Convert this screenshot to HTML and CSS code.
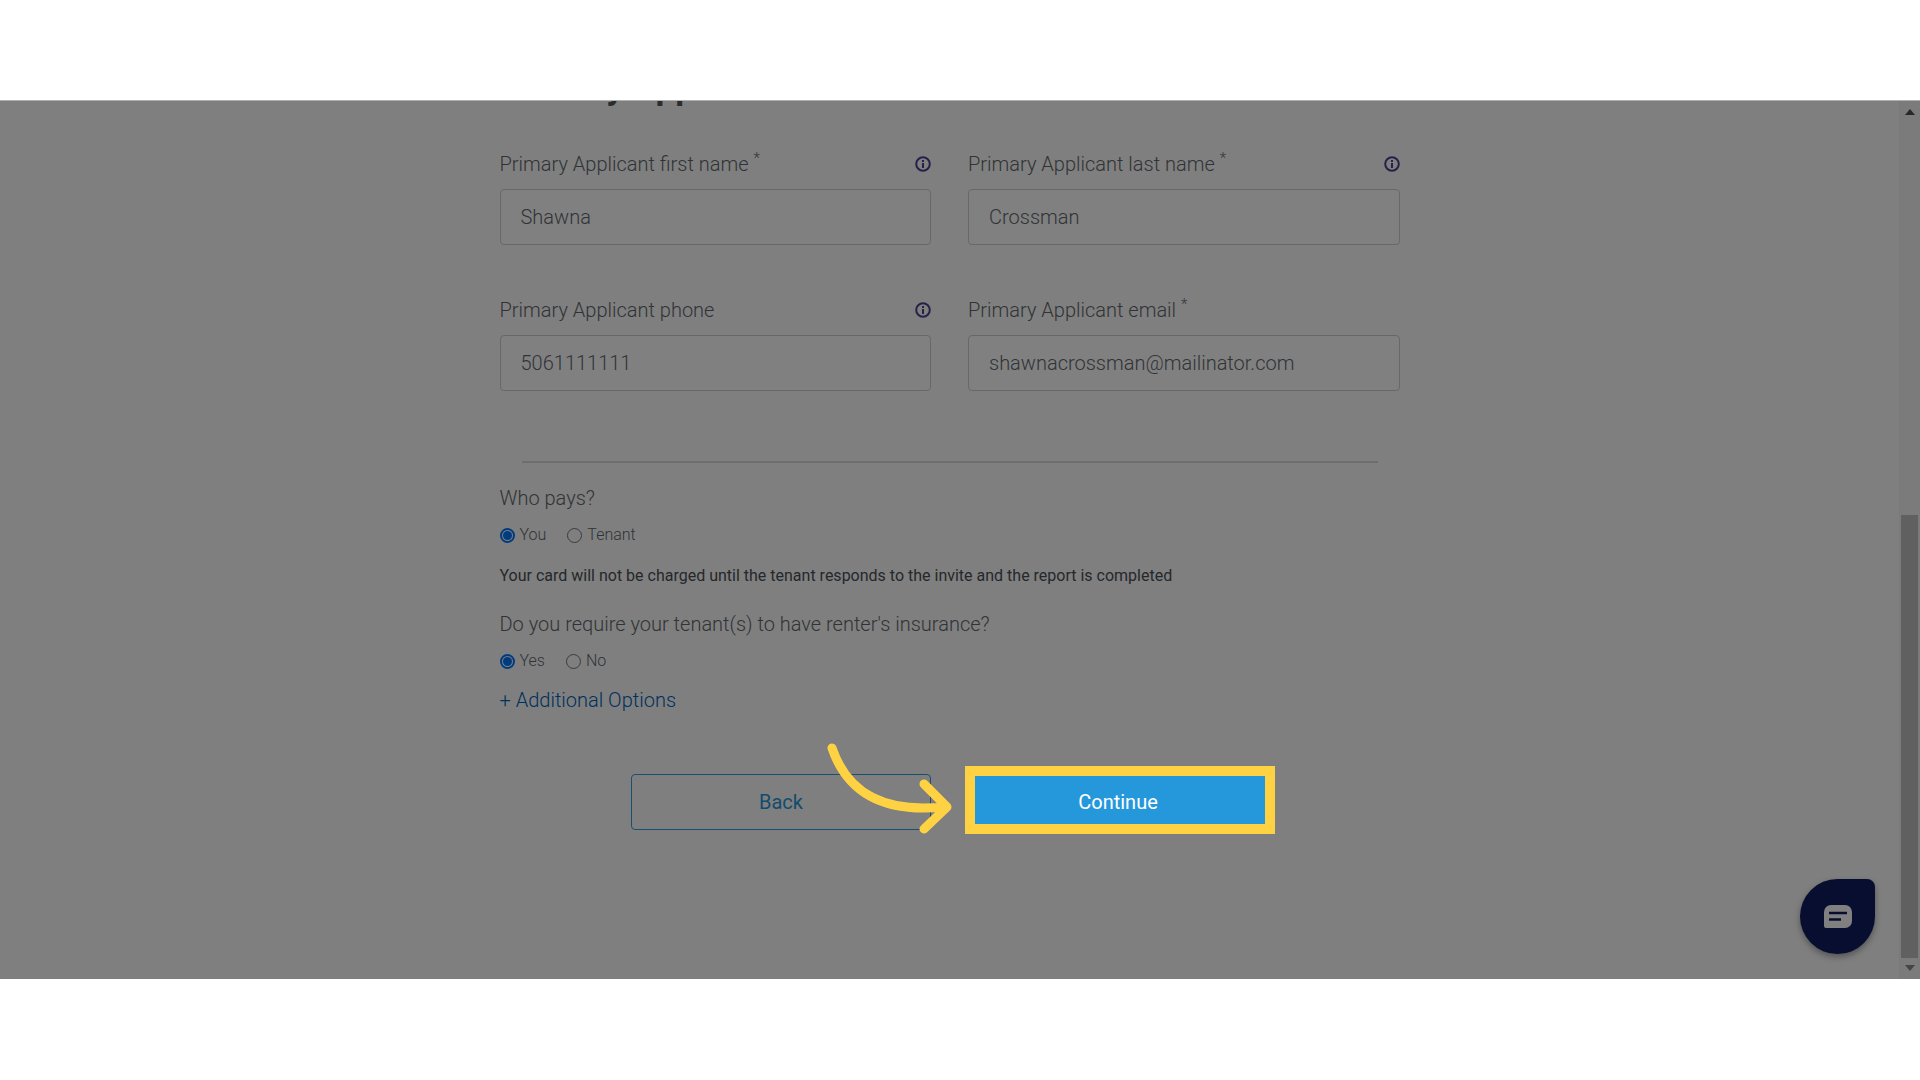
FILE: index.html
```html
<!DOCTYPE html>
<html lang="en">
<head>
    <meta charset="UTF-8">
    <meta name="viewport" content="width=device-width, initial-scale=1.0">
    <title>Primary Applicant</title>
    <link rel="stylesheet" href="styles.css">
</head>
<body>
    <div class="screen">
        <main class="content">
            <form class="form">
                <h1>Primary Applicant</h1>
                <div class="fields">
                    <div class="field">
                        <div class="field-head">
                            <label for="firstName">Primary Applicant first name <sup>*</sup></label>
                            <svg class="info" viewBox="0 0 16 16"><circle cx="8" cy="8" r="6.8"/><path d="M8 7v5M8 4v2"/></svg>
                        </div>
                        <input type="text" id="firstName" value="Shawna">
                    </div>
                    <div class="field">
                        <div class="field-head">
                            <label for="lastName">Primary Applicant last name <sup>*</sup></label>
                            <svg class="info" viewBox="0 0 16 16"><circle cx="8" cy="8" r="6.8"/><path d="M8 7v5M8 4v2"/></svg>
                        </div>
                        <input type="text" id="lastName" value="Crossman">
                    </div>
                    <div class="field">
                        <div class="field-head">
                            <label for="phone">Primary Applicant phone</label>
                            <svg class="info" viewBox="0 0 16 16"><circle cx="8" cy="8" r="6.8"/><path d="M8 7v5M8 4v2"/></svg>
                        </div>
                        <input type="tel" id="phone" value="5061111111">
                    </div>
                    <div class="field">
                        <div class="field-head">
                            <label for="email">Primary Applicant email <sup>*</sup></label>
                        </div>
                        <input type="email" id="email" value="shawnacrossman@mailinator.com">
                    </div>
                </div>
                <hr>
                <fieldset>
                    <legend>Who pays?</legend>
                    <div class="radios">
                        <label><input type="radio" name="payer" checked>You</label>
                        <label><input type="radio" name="payer">Tenant</label>
                    </div>
                </fieldset>
                <p class="note">Your card will not be charged until the tenant responds to the invite and the report is completed</p>
                <fieldset>
                    <legend>Do you require your tenant(s) to have renter's insurance?</legend>
                    <div class="radios">
                        <label><input type="radio" name="insurance" checked>Yes</label>
                        <label><input type="radio" name="insurance">No</label>
                    </div>
                </fieldset>
                <a class="more" href="#">+ Additional Options</a>
                <div class="buttons">
                    <button type="button" class="btn btn-back">Back</button>
                    <div class="target">
                        <button type="button" class="btn btn-continue">Continue</button>
                        <div class="highlight"></div>
                        <svg class="arrow" viewBox="0 0 130 100"><path d="M10 10C26 57 64 75 122 69M102 46l23 23-23 22"/></svg>
                    </div>
                </div>
            </form>
        </main>
        <div class="scrollbar">
            <svg class="scroll-arrow" viewBox="0 0 10 6"><path d="M5 0l5 6H0z"/></svg>
            <div class="track"><div class="thumb"></div></div>
            <svg class="scroll-arrow down" viewBox="0 0 10 6"><path d="M0 0h10L5 6z"/></svg>
        </div>
        <button type="button" class="chat" aria-label="Chat">
            <svg viewBox="0 0 28 23"><path class="bubble" d="M7 0h14a7 7 0 0 1 7 7v9a7 7 0 0 1-7 7H2a2 2 0 0 1-2-2V7a7 7 0 0 1 7-7z"/><path class="lines" d="M5 8h18M5 14.500h12"/></svg>
        </button>
    </div>
</body>
</html>
```
FILE: styles.css
```css
* {
    box-sizing: border-box;
}
body {
    font-family: Roboto, sans-serif;
    font-weight: 300;
    font-size: 20px;
    line-height: 24px;
    color: #303336;
    background-color: #fff;
    margin: 0;
    padding: 100px 0 101px;
    min-height: 100vh;
    display: flex;
}
.screen {
    position: relative;
    flex: 1;
    display: flex;
    overflow: hidden;
    background-color: #7f7f7f;
    border-top: 1px solid #adb0ad;
}
.content {
    flex: 1;
    padding: 0 20px;
}
.form {
    max-width: 900px;
    margin: 0 auto;
}
h1 {
    font-size: 35px;
    font-weight: 700;
    line-height: 40px;
    margin: -33px 0 42px;
    color: #2a2d30;
}
.fields {
    display: grid;
    grid-template-columns: 1fr 1fr;
    gap: 51px 37px;
}
.field-head {
    display: flex;
    justify-content: space-between;
    align-items: center;
    height: 28px;
    margin-bottom: 11px;
}
sup {
    font-size: 15px;
    line-height: 0;
}
.info {
    width: 16px;
    height: 16px;
    fill: none;
    stroke: #29204a;
    stroke-width: 2;
}
.field input {
    width: 100%;
    height: 56px;
    padding: 0 20px;
    border: 1px solid #686868;
    border-radius: 4px;
    background-color: #808080;
    font: inherit;
    color: inherit;
    display: block;
}
hr {
    height: 2px;
    margin: 70px 22px 23px;
    border: none;
    background-color: #6e6e6e;
}
fieldset {
    border: none;
    margin: 0;
    padding: 0;
}
legend {
    padding: 0;
    margin-bottom: 13px;
}
.radios {
    display: flex;
    gap: 21px;
    font-size: 16px;
}
.radios label {
    display: flex;
    align-items: center;
    gap: 5px;
}
.radios input {
    appearance: none;
    width: 15px;
    height: 15px;
    margin: 0;
    border: 1px solid #3b3b3b;
    border-radius: 50%;
}
.radios input:checked {
    border: 2px solid #003b7f;
    background: #003b7f content-box;
    padding: 1px;
}
.note {
    font-size: 16px;
    font-weight: 400;
    margin: 17px 0 24px;
    color: #24282b;
}
.more {
    display: inline-block;
    margin-top: 15px;
    color: #00305c;
    text-decoration: none;
}
.buttons {
    display: flex;
    justify-content: center;
    gap: 37px;
    margin-top: 62px;
}
.btn {
    width: 300px;
    height: 56px;
    border: 1px solid #175170;
    border-radius: 4px;
    background: none;
    font: inherit;
    font-weight: 400;
    color: #124c6c;
}
.target {
    position: relative;
}
.btn-continue {
    border: none;
    background-color: #2598db;
    color: #fff;
}
.highlight {
    position: absolute;
    top: -8px;
    left: -3px;
    width: 310px;
    height: 68px;
    border: 10px solid #ffd243;
}
.arrow {
    position: absolute;
    top: -36px;
    left: -146px;
    width: 130px;
    height: 100px;
    fill: none;
    stroke: #ffd243;
    stroke-width: 9;
    stroke-linecap: round;
    stroke-linejoin: round;
}
.scrollbar {
    width: 21px;
    padding: 8px 2px;
    display: flex;
    flex-direction: column;
    align-items: center;
    background-color: #7b7b7b;
}
.scroll-arrow {
    width: 10px;
    height: 6px;
    fill: #282828;
}
.scroll-arrow.down {
    fill: #454545;
}
.track {
    flex: 1;
    width: 17px;
    margin: 8px 0 7px;
    display: flex;
    align-items: flex-end;
}
.thumb {
    width: 100%;
    height: 53%;
    background-color: #606060;
}
.chat {
    position: absolute;
    right: 45px;
    bottom: 25px;
    width: 75px;
    height: 75px;
    padding: 0;
    border: none;
    border-radius: 50% 8px 50% 50%;
    background-color: #080e30;
    box-shadow: 0 3px 6px rgba(0, 0, 0, 0.35);
    display: flex;
    align-items: center;
    justify-content: center;
}
.chat svg {
    width: 28px;
    height: 23px;
}
.bubble {
    fill: #808080;
}
.lines {
    stroke: #080e30;
    stroke-width: 2.5;
}
```
